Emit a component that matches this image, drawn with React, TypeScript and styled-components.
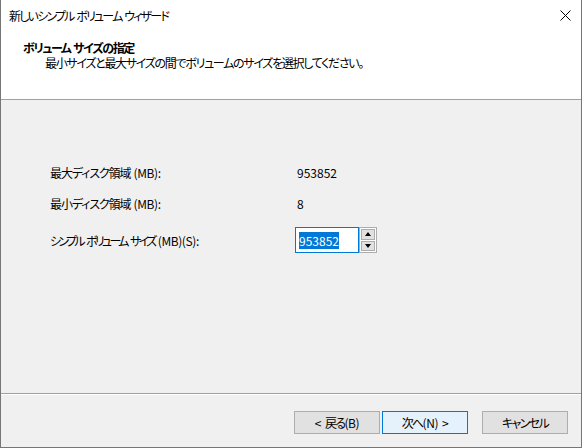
import React from "react";
import styled, { createGlobalStyle } from "styled-components";

const GlobalStyle = createGlobalStyle`
  html, body {
    margin: 0;
    padding: 0;
    background: #fff;
  }
  body {
    font-family: "Noto Sans CJK JP", "Noto Sans", sans-serif;
    font-size: 12px;
    font-feature-settings: "palt" 1;
    color: #000;
  }
`;

// Latin runs keep near-normal spacing inside tightened Japanese text
const Latin = styled.span`
  letter-spacing: -0.4px;
`;

const Window = styled.div`
  width: 582px;
  height: 448px;
  box-sizing: border-box;
  border: 1px solid #767676;
  border-top: none;
  display: flex;
  flex-direction: column;
  background: #fff;
`;

const TitleBar = styled.div`
  height: 31px;
  display: flex;
  align-items: center;
  justify-content: space-between;
  padding-left: 8px;
  line-height: 15px;
`;

const Title = styled.span`
  letter-spacing: -1.8px;
  word-spacing: 1.8px;
`;

const CloseButton = styled.div`
  width: 31px;
  height: 31px;
  display: flex;
  align-items: center;
  justify-content: center;
`;

const Header = styled.div`
  height: 69px;
  box-sizing: border-box;
  padding: 9px 0 0 22px;
  border-bottom: 1px solid #a0a0a0;
  line-height: 15px;
`;

const HeaderTitle = styled.div`
  font-weight: bold;
  letter-spacing: -1.45px;
  word-spacing: 1.5px;
`;

const HeaderText = styled.div`
  margin-left: 22px;
  letter-spacing: -1.3px;
`;

const Body = styled.div`
  flex: 1;
  background: #f0f0f0;
  padding: 56px 0 0 49px;
`;

const Form = styled.div`
  display: grid;
  grid-template-columns: 245px auto;
  grid-template-rows: 32px 31px 42px;
  align-items: center;
  line-height: 15px;
`;

const Label = styled.div<{ $spacing: number }>`
  letter-spacing: ${(p) => p.$spacing}px;
  word-spacing: ${(p) => 0.5 - p.$spacing}px;
`;

const Value = styled.div`
  padding-left: 2px;
`;

const SpinBox = styled.div`
  display: flex;
  height: 26px;
`;

const TextBox = styled.div`
  width: 64px;
  box-sizing: border-box;
  border: 1px solid #0078d7;
  background: #fff;
  padding-left: 3px;
  display: flex;
  align-items: center;
`;

const Selected = styled.span`
  background: #0078d7;
  color: #fff;
  line-height: 17px;
`;

const Spinner = styled.div`
  width: 18px;
  box-sizing: border-box;
  border: 1px solid #adadad;
  background: #fff;
  padding: 1px;
  display: flex;
  flex-direction: column;
  gap: 1px;
`;

const SpinButton = styled.div`
  flex: 1;
  border: 1px solid #adadad;
  background: #e1e1e1;
  display: flex;
  align-items: center;
  justify-content: center;
`;

const Arrow = styled.div<{ $down?: boolean }>`
  width: 0;
  height: 0;
  border-left: 3px solid transparent;
  border-right: 3px solid transparent;
  ${(p) =>
    p.$down ? "border-top: 4px solid #000;" : "border-bottom: 4px solid #000;"}
`;

const Footer = styled.div`
  height: 54px;
  box-sizing: border-box;
  border-top: 1px solid #a0a0a0;
  box-shadow: inset 0 1px 0 #fff;
  background: #f0f0f0;
  padding: 17px 13px 0 0;
  display: flex;
  justify-content: flex-end;
  align-items: flex-start;
`;

const Button = styled.div<{ $primary?: boolean; $gap?: number }>`
  width: 86px;
  height: 23px;
  box-sizing: border-box;
  margin-left: ${(p) => p.$gap ?? 0}px;
  border: 1px solid ${(p) => (p.$primary ? "#0078d7" : "#adadad")};
  background: ${(p) => (p.$primary ? "#e5f1fb" : "#e1e1e1")};
  display: flex;
  align-items: center;
  justify-content: center;
  line-height: 15px;
  letter-spacing: -1.6px;
  word-spacing: 1.6px;
  white-space: pre;
`;

export default function App() {
  return (
    <>
      <GlobalStyle />
      <Window>
        <TitleBar>
          <Title>新しいシンプル ボリューム ウィザード</Title>
          <CloseButton>
            <svg width="11" height="11" viewBox="0 0 11 11">
              <path d="M0.5 0.5 L10.5 10.5 M10.5 0.5 L0.5 10.5" stroke="#000" strokeWidth="1" />
            </svg>
          </CloseButton>
        </TitleBar>
        <Header>
          <HeaderTitle>ボリューム サイズの指定</HeaderTitle>
          <HeaderText>最小サイズと最大サイズの間でボリュームのサイズを選択してください。</HeaderText>
        </Header>
        <Body>
          <Form>
            <Label $spacing={-1.1}>
              最大ディスク領域 <Latin>(MB):</Latin>
            </Label>
            <Value>953852</Value>
            <Label $spacing={-1.1}>
              最小ディスク領域 <Latin>(MB):</Latin>
            </Label>
            <Value>8</Value>
            <Label $spacing={-2.7}>
              シンプル ボリューム サイズ <Latin>(MB)(S):</Latin>
            </Label>
            <SpinBox>
              <TextBox>
                <Selected>953852</Selected>
              </TextBox>
              <Spinner>
                <SpinButton>
                  <Arrow />
                </SpinButton>
                <SpinButton>
                  <Arrow $down />
                </SpinButton>
              </Spinner>
            </SpinBox>
          </Form>
        </Body>
        <Footer>
          <Button>
            <Latin>&lt; </Latin>戻る<Latin>(B)</Latin>
          </Button>
          <Button $primary $gap={2}>
            次へ<Latin>(N) &gt;</Latin>
          </Button>
          <Button $gap={14}>キャンセル</Button>
        </Footer>
      </Window>
    </>
  );
}
